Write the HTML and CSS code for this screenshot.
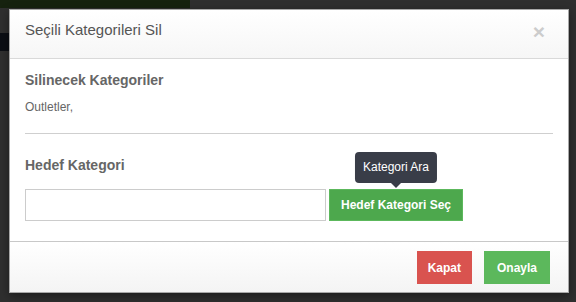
FILE: index.html
```html
<!DOCTYPE html>
<html lang="tr">
<head>
    <meta charset="UTF-8">
    <meta name="viewport" content="width=device-width, initial-scale=1.0">
    <title>Seçili Kategorileri Sil</title>
    <link rel="stylesheet" href="styles.css">
</head>
<body>
    <div class="backdrop">
        <div class="modal">
            <div class="modal-header">
                <h3 class="modal-title">Seçili Kategorileri Sil</h3>
                <span class="close">&times;</span>
            </div>

            <div class="modal-body">
                <h4>Silinecek Kategoriler</h4>
                <p class="selected">Outletler,</p>

                <hr>

                <h4 class="target-title">Hedef Kategori</h4>
                <div class="target-row">
                    <input type="text" class="target-input">
                    <div class="tip-wrap">
                        <button class="btn btn-select">Hedef Kategori Seç</button>
                        <div class="tooltip">Kategori Ara</div>
                    </div>
                </div>
            </div>

            <div class="modal-footer">
                <button class="btn btn-danger">Kapat</button>
                <button class="btn btn-success">Onayla</button>
            </div>
        </div>
    </div>
</body>
</html>
```

FILE: styles.css
```css
body, html {
    margin: 0;
    padding: 0;
    height: 100%;
    font-family: "Liberation Sans", Arial, sans-serif;
}
.backdrop {
    height: 100%;
    padding: 9px 0 0 9px;
    box-sizing: border-box;
    background:
        linear-gradient(#16220f, #16220f) 0 0 / 190px 8px no-repeat,
        linear-gradient(#0b0e14, #0b0e14) 0 33px / 9px 18px no-repeat,
        #2f2f2f;
}
.modal {
    width: 560px;
    background-color: white;
    border: 1px solid #a8a8a8;
    box-sizing: border-box;
    box-shadow: 0 3px 9px rgba(0, 0, 0, 0.4);
}
.modal-header {
    display: flex;
    justify-content: space-between;
    align-items: flex-start;
    padding: 9px 15px 16px;
    background: linear-gradient(#ffffff, #f6f6f6);
    border-bottom: 1px solid #d9d9d9;
}
.modal-title {
    margin: 0;
    font-size: 15px;
    line-height: 21px;
    font-weight: normal;
    color: #555;
}
.close {
    font-size: 21px;
    line-height: 21px;
    font-weight: bold;
    color: #ccc;
    margin: 2px 8px 0 0;
}
.modal-body {
    padding: 11px 15px 20px;
}
.modal-body h4 {
    margin: 0 0 9px;
    font-size: 14px;
    line-height: 20px;
    font-weight: bold;
    color: #666;
}
.selected {
    margin: 0;
    font-size: 12px;
    line-height: 17px;
    color: #666;
}
hr {
    border: 0;
    border-top: 1px solid #cfcfcf;
    margin: 17px 0 21px;
}
.modal-body .target-title {
    margin-bottom: 14px;
}
.target-row {
    display: flex;
    gap: 3px;
}
.target-input {
    width: 301px;
    height: 32px;
    box-sizing: border-box;
    border: 1px solid #ccc;
    padding: 4px 8px;
    margin: 0;
}
.tip-wrap {
    position: relative;
}
.btn {
    height: 33px;
    border: 1px solid transparent;
    padding: 0 11px;
    font-family: "Liberation Sans", Arial, sans-serif;
    font-size: 12px;
    font-weight: bold;
    color: white;
    cursor: pointer;
}
.btn-select {
    height: 32px;
    background-color: #4da84d;
    border-color: #5cb85c;
}
.tooltip {
    position: absolute;
    bottom: 100%;
    left: 50%;
    transform: translateX(-50%);
    margin-bottom: 6px;
    padding: 8px 8px;
    background-color: #393d48;
    color: white;
    font-size: 12px;
    line-height: 15px;
    white-space: nowrap;
    border-radius: 4px;
}
.tooltip::after {
    content: "";
    position: absolute;
    top: 100%;
    left: 50%;
    margin-left: -5px;
    border-width: 5px 5px 0;
    border-style: solid;
    border-color: #393d48 transparent transparent;
}
.modal-footer {
    display: flex;
    justify-content: flex-end;
    gap: 12px;
    padding: 9px 18px 8px;
    background: linear-gradient(#ffffff, #f4f4f4);
    border-top: 1px solid #c8c8c8;
}
.btn-danger {
    background-color: #d9534f;
    padding: 0 10px;
}
.btn-success {
    background-color: #5cb85c;
    padding: 0 12px;
}
```
